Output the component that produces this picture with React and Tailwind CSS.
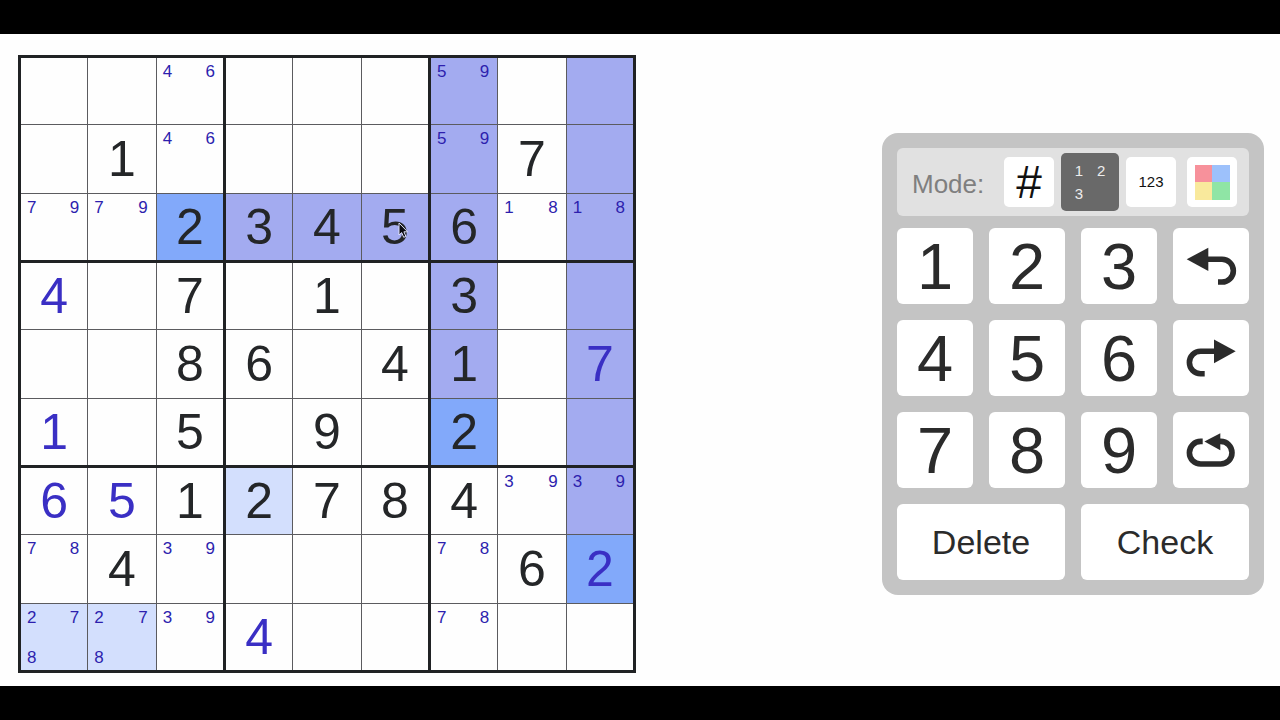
import { useState } from "react";

const DIGITS = [
  "000000000",
  "010000070",
  "002345600",
  "407010300",
  "008604107",
  "105090200",
  "651278400",
  "040000062",
  "000400000",
];

// "e" marks a digit entered by the player
const ENTERED = ["", "", "", "e", "........e", "e", "ee", "........e", "...e"];

// p: purple path, b: blue match, l: light match
const SHADES = [
  "......p.p",
  "......p.p",
  "..bpppp.p",
  "......p.p",
  "......p.p",
  "......b.p",
  "...l....p",
  "........b",
  "ll.......",
];

const SHADE_CLASS = { p: "bg-[#a3abf0]", b: "bg-[#82a9fa]", l: "bg-[#d3dffd]" };

const NOTES = {
  "0-2": "46", "0-6": "59",
  "1-2": "46", "1-6": "59",
  "2-0": "79", "2-1": "79", "2-7": "18", "2-8": "18",
  "6-7": "39", "6-8": "39",
  "7-0": "78", "7-2": "39", "7-6": "78",
  "8-0": "278", "8-1": "278", "8-2": "39", "8-6": "78",
};

function Notes({ value }) {
  return (
    <div className="grid h-full grid-cols-2 content-between pt-1 pr-2 pb-[2px] pl-[6px] text-[17px] leading-5 text-[#2d1fae]">
      {value.split("").map((n, i) => (
        <span key={n} className={i % 2 ? "text-right" : "text-left"}>{n}</span>
      ))}
    </div>
  );
}

function Pointer() {
  return (
    <svg className="absolute top-7 left-9" width="11" height="17" viewBox="0 0 11 17" aria-hidden="true">
      <path d="M1 1v12l2.7-2.4 2 4.7 2.2-.9-2-4.6H9.6Z" fill="#0b0b12" stroke="#dfe2fb" strokeWidth="1" />
    </svg>
  );
}

function Board() {
  return (
    <table aria-label="Sudoku board" className="h-[618px] w-[618px] shrink-0 table-fixed border-collapse border-3 border-[#202224]">
      <tbody>
        {DIGITS.map((row, r) => (
          <tr key={r} className={r % 3 === 2 ? "border-b-3 border-[#202224]" : "border-b border-[#5b5b5f]"}>
            {row.split("").map((d, c) => {
              const notes = NOTES[`${r}-${c}`];
              return (
                <td
                  key={c}
                  className={`relative h-[68px] p-0 text-center text-[50px] leading-[60px] ${
                    c % 3 === 2 ? "border-r-3 border-r-[#202224]" : "border-r border-r-[#5b5b5f]"
                  } ${SHADE_CLASS[SHADES[r][c]] || ""} ${ENTERED[r][c] === "e" ? "text-[#3a2fc4]" : "text-[#242628]"}`}
                >
                  {notes ? <Notes value={notes} /> : d !== "0" && d}
                  {r === 2 && c === 5 && <Pointer />}
                </td>
              );
            })}
          </tr>
        ))}
      </tbody>
    </table>
  );
}

function KeyIcon({ line, head }) {
  return (
    <svg viewBox="0 0 76 76" className="h-full w-full" aria-hidden="true">
      <path d={line} fill="none" stroke="#2b2b2b" strokeWidth="5.6" />
      <path d={head} fill="#2b2b2b" />
    </svg>
  );
}

const KEYS = [
  "1", "2", "3",
  { label: "Undo", line: "M35 31.3H49a11.35 11.35 0 0 1 0 22.7H45", head: "M13.7 31.3 35.3 19.7V43Z" },
  "4", "5", "6",
  { label: "Redo", line: "M41 31.3H27.6a11.2 11.2 0 0 0 0 22.4H31.7", head: "M62.7 31.3 41 19.4V43.2Z" },
  "7", "8", "9",
  {
    label: "Restart",
    line: "M29.7 29.4H27.7a11.3 11.3 0 0 0 0 22.6H47.7a11.3 11.3 0 0 0 0-22.6H46",
    head: "M31.4 29.5 47.3 21.2V38.3Z",
  },
];

const MODES = [
  { id: "digit", label: "Digit", face: <span className="text-[46px] leading-none">#</span> },
  {
    id: "corner",
    label: "Corner notes",
    face: (
      <span className="grid grid-cols-2 gap-x-[14px] text-[15px] leading-[23px]">
        <span>1</span>
        <span>2</span>
        <span>3</span>
      </span>
    ),
  },
  { id: "center", label: "Center notes", face: <span className="text-[15px]">123</span> },
  {
    id: "color",
    label: "Color",
    face: (
      <span className="grid h-[35px] w-[35px] grid-cols-2">
        <span className="bg-[#f7919b]" />
        <span className="bg-[#9dc1fb]" />
        <span className="bg-[#f9e99c]" />
        <span className="bg-[#8fe5a5]" />
      </span>
    ),
  },
];

function Keypad() {
  const [mode, setMode] = useState("corner");
  return (
    <section aria-label="Keypad" className="flex w-[382px] shrink-0 flex-col gap-3 rounded-2xl bg-[#c4c4c4] p-[15px] text-[#2b2b2b]">
      <div className="flex h-[68px] items-center justify-between rounded-md bg-[#e1e1e1] pr-2 pl-[15px]">
        <span className="pt-1 text-[26px] text-[#7f7f7f]">Mode:</span>
        <div className="flex gap-[3px]">
          {MODES.map((m) => (
            <div key={m.id} className="flex h-[58px] w-[58px] items-center justify-center">
              <button
                type="button"
                aria-label={m.label}
                aria-pressed={mode === m.id}
                onClick={() => setMode(m.id)}
                className={`flex items-center justify-center rounded-[5px] ${
                  mode === m.id ? "h-full w-full bg-[#696969] text-[#ededed]" : "h-[50px] w-[50px] bg-white text-[#111111]"
                }`}
              >
                {m.face}
              </button>
            </div>
          ))}
        </div>
      </div>
      <div className="grid grid-cols-4 gap-4">
        {KEYS.map((k) => (
          <button
            key={k.label || k}
            type="button"
            aria-label={k.label}
            className="flex h-[76px] items-center justify-center rounded-md bg-white text-[65px] leading-none"
          >
            {k.label ? <KeyIcon line={k.line} head={k.head} /> : k}
          </button>
        ))}
        {["Delete", "Check"].map((t) => (
          <button key={t} type="button" className="col-span-2 h-[76px] rounded-md bg-white text-[34px] leading-none">
            {t}
          </button>
        ))}
      </div>
    </section>
  );
}

export default function App() {
  return (
    <div className="flex min-h-screen flex-col bg-black py-[34px] font-['Liberation_Sans',Arial,sans-serif]">
      <main className="flex flex-1 items-center justify-between gap-8 bg-[#fefefe] pt-2 pr-4 pl-[18px]">
        <Board />
        <Keypad />
      </main>
    </div>
  );
}
